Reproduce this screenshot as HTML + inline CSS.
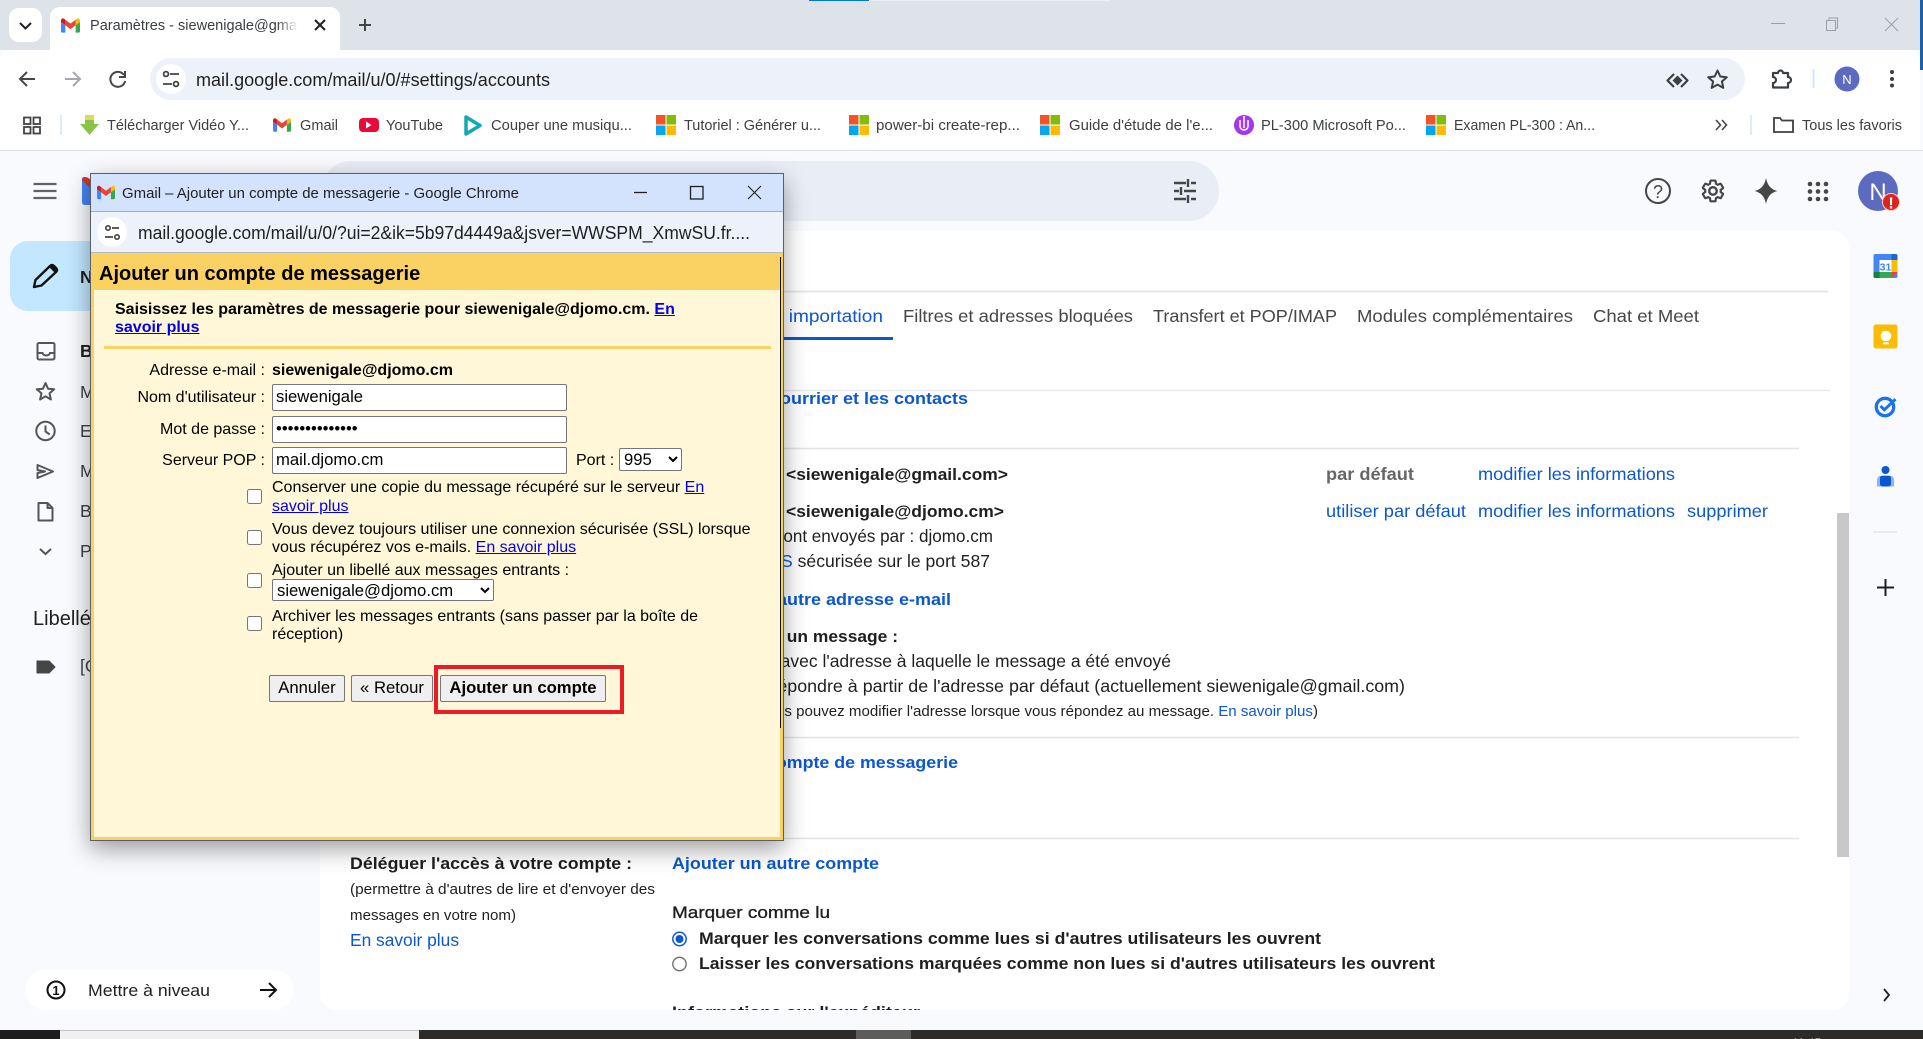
<!DOCTYPE html>
<html lang="fr">
<head>
<meta charset="utf-8">
<title>Paramètres - siewenigale@gmail.com - Gmail</title>
<style>
html,body{margin:0;padding:0;width:1923px;height:1039px;overflow:hidden;background:#f8fafd;font-family:"Liberation Sans",Arial,sans-serif}
.a{position:absolute}
svg{position:absolute;left:0;top:0;overflow:visible}
svg text{font-family:"Liberation Sans",Arial,sans-serif}
#pop{position:absolute;left:90px;top:173px;width:694px;height:668px;box-sizing:border-box;border:1px solid #5a5f66;background:#fff7d7;box-shadow:0 8px 22px rgba(0,0,0,.38);z-index:5}
#in{position:absolute;left:-91px;top:-174px;width:1923px;height:1039px}
#in .t{position:absolute;font-size:16px;line-height:18px;color:#000;white-space:nowrap}
#in a{color:#00e;text-decoration:underline}
#in input[type=text],#in input[type=password]{position:absolute;box-sizing:border-box;left:272px;width:295px;height:27px;padding:0 3px 2px;border:1px solid #767676;border-radius:2px;background:#fff;font:16.67px "Liberation Sans",Arial,sans-serif;color:#000;margin:0;outline:0}
#in input[type=checkbox]{position:absolute;left:247px;width:15px;height:15px;margin:0}
#in select{position:absolute;box-sizing:border-box;font:16.67px "Liberation Sans",Arial,sans-serif;background:#fff;border:1px solid #767676;border-radius:2px;color:#000;margin:0;padding:0}
#in button{position:absolute;box-sizing:border-box;top:675px;height:27px;border:1px solid #767676;border-radius:2px;background:#efefef;font:16.67px "Liberation Sans",Arial,sans-serif;color:#000;padding:0 0 2px;margin:0}
</style>
</head>
<body>

<!-- Browser chrome backgrounds -->
<div class="a" style="left:0;top:0;width:1923px;height:50px;background:#dee3e9"></div>
<div class="a" style="left:809px;top:0;width:60px;height:1px;background:#0078d4"></div>
<div class="a" style="left:869px;top:0;width:241px;height:1px;background:#eceff2"></div>
<div class="a" style="left:0;top:50px;width:1920px;height:100px;background:#fff;border-radius:10px 10px 0 0"></div>
<div class="a" style="left:0;top:150px;width:1923px;height:1px;background:#dfe1e5"></div>
<div class="a" style="left:1920px;top:0;width:3px;height:70px;background:#1f5fa8"></div>
<div class="a" style="left:9px;top:8px;width:33px;height:34px;background:#fff;border-radius:10px"></div>
<div class="a" style="left:50px;top:7px;width:290px;height:43px;background:#fff;border-radius:10px 10px 0 0"></div>
<div class="a" style="left:150px;top:58px;width:1595px;height:42px;background:#edf2fa;border-radius:21px"></div>
<div class="a" style="left:156px;top:64px;width:30px;height:30px;background:#fff;border-radius:50%"></div>

<!-- Gmail backgrounds -->
<div class="a" style="left:321px;top:161px;width:898px;height:60px;background:#e9eef6;border-radius:30px"></div>
<div class="a" style="left:320px;top:231px;width:1529px;height:779px;background:#fff;border-radius:16px"></div>
<div class="a" style="left:10px;top:241px;width:140px;height:70px;background:#c2e7ff;border-radius:18px"></div>
<div class="a" style="left:25px;top:970px;width:269px;height:40px;background:#fff;border-radius:20px"></div>
<div class="a" style="left:1837px;top:513px;width:12px;height:344px;background:#c8c8c8"></div>

<svg width="1923" height="1039" viewBox="0 0 1923 1039">
  <symbol id="gm" viewBox="0 0 24 24">
    <path fill="#4285f4" d="M1.6 21h3.900v-9.300L0 7.600V19.400C0 20.300.7 21 1.600 21z"/>
    <path fill="#34a853" d="M18.500 21h3.900c.9 0 1.600-.7 1.600-1.600V7.600l-5.500 4.100"/>
    <path fill="#fbbc04" d="M18.500 4.700v7L24 7.600V5.500c0-2-2.300-3.200-3.900-2z"/>
    <path fill="#ea4335" d="M5.500 11.700v-7L12 9.600l6.500-4.900v7L12 16.600"/>
    <path fill="#c5221f" d="M0 5.500v2.100l5.500 4.100v-7L3.900 3.500C2.300 2.300 0 3.500 0 5.500z"/>
  </symbol>
  <symbol id="ms" viewBox="0 0 20 20">
    <rect width="9.500" height="9.500" fill="#f35325"/><rect x="10.500" width="9.500" height="9.500" fill="#81bc06"/>
    <rect y="10.500" width="9.500" height="9.500" fill="#05a6f0"/><rect x="10.500" y="10.500" width="9.500" height="9.500" fill="#ffba08"/>
  </symbol>
  <linearGradient id="fade" x1="0" x2="1" y1="0" y2="0"><stop offset="0" stop-color="#fff" stop-opacity="0"/><stop offset="1" stop-color="#fff"/></linearGradient>

  <!-- tab -->
  <path d="M20 23l5.500 5.500L31 23" fill="none" stroke="#1f1f1f" stroke-width="2"/>
  <use href="#gm" x="61" y="15" width="19" height="21"/>
  <text x="90" y="30" font-size="15" fill="#3c4043" textLength="207" lengthAdjust="spacingAndGlyphs">Paramètres - siewenigale@gma</text>
  <rect x="277" y="14" width="21" height="24" fill="url(#fade)"/>
  <path d="M315 20l10 10M325 20l-10 10" stroke="#1f1f1f" stroke-width="2"/>
  <path d="M365 19v12M359 25h12" stroke="#444" stroke-width="2"/>
  <!-- window controls -->
  <path d="M1771 23.500h14" stroke="#9aa0a6" stroke-width="1"/>
  <path d="M1826.500 20.500h9v10h-9zM1829 20.500v-2.500h8.500v10h-2" fill="none" stroke="#9aa0a6"/>
  <path d="M1885 18l13 13M1898 18l-13 13" stroke="#9aa0a6"/>

  <!-- nav -->
  <path d="M35 79H21M27 72l-7 7 7 7" fill="none" stroke="#474747" stroke-width="2"/>
  <path d="M65 79h14M73 72l7 7-7 7" fill="none" stroke="#a4a7ab" stroke-width="2"/>
  <path d="M124 75a7.500 7.500 0 1 0 1.200 6M125 71v6h-6" fill="none" stroke="#474747" stroke-width="2"/>
  <g fill="none" stroke="#444" stroke-width="1.800"><circle cx="166" cy="74" r="2.400"/><path d="M170 74h9M163 84h9"/><circle cx="176" cy="84" r="2.400"/></g>
  <text x="196" y="86" font-size="18" fill="#1f1f1f" textLength="354" lengthAdjust="spacingAndGlyphs">mail.google.com/mail/u/0/#settings/accounts</text>
  <path d="M1674 74l-6.500 6.500 6.500 6.500M1681 74l6.500 6.500-6.500 6.500" fill="none" stroke="#3c4043" stroke-width="2.200" stroke-linejoin="round"/>
  <path d="M1677.500 75.500l5 5-5 5-5-5z" fill="#3c4043"/>
  <path d="M1717.500 70.500l2.800 6 6.500.7-4.900 4.300 1.400 6.400-5.800-3.300-5.800 3.300 1.400-6.400-4.900-4.300 6.500-.7z" fill="none" stroke="#3c4043" stroke-width="2" stroke-linejoin="round"/>
  <path d="M1773 73h5a2.500 2.500 0 0 1 5 0h5v4a3 3 0 0 1 0 6v4.500h-15V83a3 3 0 0 0 0-6z" fill="none" stroke="#3c4043" stroke-width="2.200" stroke-linejoin="round"/>
  <rect x="1812.500" y="69" width="2" height="19" fill="#d3e3fd"/>
  <circle cx="1847" cy="79" r="12.500" fill="#5c6bc0"/>
  <text x="1847" y="84" font-size="13" fill="#fff" text-anchor="middle">N</text>
  <g fill="#3c4043"><circle cx="1892" cy="72" r="2"/><circle cx="1892" cy="79" r="2"/><circle cx="1892" cy="85.500" r="2"/></g>

  <!-- bookmarks -->
  <g fill="none" stroke="#444" stroke-width="1.800"><rect x="24" y="117.500" width="6.500" height="6.500"/><rect x="33.500" y="117.500" width="6.500" height="6.500"/><rect x="24" y="127" width="6.500" height="6.500"/><rect x="33.500" y="127" width="6.500" height="6.500"/></g>
  <path d="M61 115v20" stroke="#d3e3fd" stroke-width="1.500"/>
  <path d="M85 115h9v9h5l-9.500 11L80 124h5z" fill="#8bc34a"/><path d="M85 115h9v5h-9z" fill="#d4e157"/>
  <text x="107" y="130" font-size="15" fill="#3c4043" textLength="142" lengthAdjust="spacingAndGlyphs">Télécharger Vidéo Y...</text>
  <use href="#gm" x="273" y="115" width="18" height="20"/>
  <text x="300" y="130" font-size="15" fill="#3c4043" textLength="38" lengthAdjust="spacingAndGlyphs">Gmail</text>
  <rect x="359" y="118" width="20" height="14" rx="4" fill="#ea0a3a"/><path d="M366 121.500v7l5.500-3.500z" fill="#fff"/>
  <text x="386" y="130" font-size="15" fill="#3c4043" textLength="57" lengthAdjust="spacingAndGlyphs">YouTube</text>
  <path d="M466 117l14 8.500-14 8.500z" fill="none" stroke="#12a8b8" stroke-width="3.500" stroke-linejoin="round"/>
  <text x="491" y="130" font-size="15" fill="#3c4043" textLength="141" lengthAdjust="spacingAndGlyphs">Couper une musiqu...</text>
  <use href="#ms" x="656" y="115" width="20" height="20"/>
  <text x="684" y="130" font-size="15" fill="#3c4043" textLength="137" lengthAdjust="spacingAndGlyphs">Tutoriel : Générer u...</text>
  <use href="#ms" x="849" y="115" width="20" height="20"/>
  <text x="876" y="130" font-size="15" fill="#3c4043" textLength="144" lengthAdjust="spacingAndGlyphs">power-bi create-rep...</text>
  <use href="#ms" x="1040" y="115" width="20" height="20"/>
  <text x="1069" y="130" font-size="15" fill="#3c4043" textLength="144" lengthAdjust="spacingAndGlyphs">Guide d'étude de l'e...</text>
  <circle cx="1244" cy="125" r="10" fill="#a435f0"/><path d="M1240 120v6a4 4 0 0 0 8 0v-6M1244 116v12" fill="none" stroke="#fff" stroke-width="1.500"/>
  <text x="1261" y="130" font-size="15" fill="#3c4043" textLength="145" lengthAdjust="spacingAndGlyphs">PL-300 Microsoft Po...</text>
  <use href="#ms" x="1426" y="115" width="20" height="20"/>
  <text x="1454" y="130" font-size="15" fill="#3c4043" textLength="141" lengthAdjust="spacingAndGlyphs">Examen PL-300 : An...</text>
  <path d="M1716 120l4.500 5-4.500 5M1722 120l4.500 5-4.500 5" fill="none" stroke="#3c4043" stroke-width="1.500"/>
  <path d="M1751 115v20" stroke="#d3e3fd" stroke-width="1.500"/>
  <path d="M1774 118h6l2 2.500h11v11.500h-19z" fill="none" stroke="#3c4043" stroke-width="1.800"/>
  <text x="1802" y="130" font-size="15" fill="#3c4043" textLength="100" lengthAdjust="spacingAndGlyphs">Tous les favoris</text>

  <!-- gmail header -->
  <g stroke="#5f6368" stroke-width="2.300"><path d="M33.500 184h23M33.500 191h23M33.500 198h23"/></g>
  <path d="M82 202v-23q0-2 3-2 3 0 7 5v23h-7q-3 0-3-3z" fill="#4285f4"/><path d="M82 180q0-3 3-3 3 0 7 4v9z" fill="#d93025"/>
  <g stroke="#444746" stroke-width="2.400" fill="none"><path d="M1174 183h12M1191 183h5M1174 191h5M1184 191h12M1174 199h12M1191 199h5M1188 179v8M1181 187v8M1188 195v8"/></g>
  <circle cx="1658" cy="191" r="12" fill="none" stroke="#444746" stroke-width="2"/>
  <text x="1658" y="198" font-size="18" fill="#444746" text-anchor="middle">?</text>
  <g transform="translate(1700 178) scale(1.080)">
    <path fill="none" stroke="#444746" stroke-width="2" d="M19.140 12.940c.04-.3.06-.61.06-.94 0-.32-.02-.64-.07-.94l2.030-1.580c.18-.14.23-.41.12-.61l-1.920-3.320c-.12-.22-.37-.29-.59-.22l-2.390.96c-.5-.38-1.030-.7-1.620-.94l-.36-2.540c-.04-.24-.24-.41-.48-.41h-3.840c-.24 0-.43.17-.47.41l-.36 2.540c-.59.24-1.130.57-1.620.94l-2.390-.96c-.22-.08-.47 0-.59.22L2.740 8.870c-.12.21-.08.47.12.61l2.030 1.580c-.05.3-.09.63-.09.94s.02.64.07.94l-2.030 1.580c-.18.14-.23.41-.12.61l1.920 3.320c.12.22.37.29.59.22l2.390-.96c.5.38 1.030.7 1.620.94l.36 2.540c.05.24.24.41.48.41h3.840c.24 0 .44-.17.47-.41l.36-2.540c.59-.24 1.130-.56 1.620-.94l2.390.96c.22.08.47 0 .59-.22l1.920-3.320c.12-.22.07-.47-.12-.61l-2.010-1.580z"/>
    <circle cx="12" cy="12" r="3.500" fill="none" stroke="#444746" stroke-width="2.200"/>
  </g>
  <path d="M1766 178q2 11 11.500 13-9.500 2-11.500 13-2-11-11.500-13 9.500-2 11.500-13z" fill="#444746"/>
  <g fill="#444746"><circle cx="1810" cy="184" r="2.300"/><circle cx="1818" cy="184" r="2.300"/><circle cx="1826" cy="184" r="2.300"/><circle cx="1810" cy="191.500" r="2.300"/><circle cx="1818" cy="191.500" r="2.300"/><circle cx="1826" cy="191.500" r="2.300"/><circle cx="1810" cy="199" r="2.300"/><circle cx="1818" cy="199" r="2.300"/><circle cx="1826" cy="199" r="2.300"/></g>
  <circle cx="1878" cy="191" r="20" fill="#5c6bc0"/>
  <text x="1878" y="200" font-size="24" fill="#fff" text-anchor="middle">N</text>
  <circle cx="1891" cy="202" r="8.500" fill="#d9251d" stroke="#f3c9c5"/>
  <text x="1891" y="208.500" font-size="16" font-weight="bold" fill="#fff" text-anchor="middle">!</text>

  <!-- left nav -->
  <path d="M34 287l1.500-7L50 266q2-2 4 0l2 2q2 2 0 4L41.500 285.500z" fill="none" stroke="#111" stroke-width="2.400" stroke-linejoin="round"/>
  <path d="M49 267l5-2 3 3-2 5z" fill="#111"/>
  <text x="80" y="283" font-size="17.500" font-weight="bold" fill="#1f1f1f">Nouveau message</text>
  <g fill="none" stroke="#555" stroke-width="2">
    <rect x="37.500" y="343" width="17" height="16.500" rx="1.500"/><path d="M37.500 353h5a3.800 3 0 0 0 7.500 0h4.500"/>
    <path d="M45.500 383l2.500 5.700 6.200.6-4.700 4.100 1.400 6.100-5.400-3.200-5.400 3.200 1.400-6.100-4.700-4.100 6.200-.6z" stroke-linejoin="round"/>
    <circle cx="45.500" cy="431" r="9.200"/><path d="M45.500 425.500v6l4.200 3"/>
    <path d="M37.500 465l15.500 6.500-15.500 6.500v-5l7.500-1.500-7.500-1.500z" stroke-linejoin="round"/>
    <path d="M38.500 503h9l5 5v12.500H38.500zM47.500 503v5h5" stroke-linejoin="round"/>
    <path d="M40 549l5.500 5 5.500-5"/>
  </g>
  <g font-size="17.500" fill="#3c4043">
    <text x="80" y="357" font-weight="bold" fill="#1f1f1f">Boîte de réception</text>
    <text x="80" y="398">Messages suivis</text>
    <text x="80" y="437">En attente</text>
    <text x="80" y="477">Messages envoyés</text>
    <text x="80" y="517">Brouillons</text>
    <text x="80" y="557">Plus</text>
    <text x="80" y="672">[Gmail]</text>
  </g>
  <text x="33" y="625" font-size="20" fill="#1f1f1f">Libellés</text>
  <path d="M37 661h12l6 6-6 6H37z" fill="#444746" stroke="#444746" stroke-linejoin="round"/>
  <circle cx="56" cy="990" r="8.500" fill="none" stroke="#111" stroke-width="2"/>
  <text x="56" y="995" font-size="13" font-weight="bold" fill="#111" text-anchor="middle">1</text>
  <text x="88" y="996" font-size="17" fill="#1f1f1f" textLength="122" lengthAdjust="spacingAndGlyphs">Mettre à niveau</text>
  <path d="M260 990h15M269 983l7 7-7 7" fill="none" stroke="#111" stroke-width="2"/>

  <!-- settings -->
  <path d="M320 291.500h1508" stroke="#e6e6e6" stroke-width="2"/>
  <text x="686" y="322" font-size="17.500" fill="#0b57d0" textLength="197" lengthAdjust="spacingAndGlyphs">Comptes et importation</text>
  <rect x="690" y="337" width="203" height="3" fill="#0b57d0"/>
  <g font-size="17.500" fill="#444746">
    <text x="903" y="322" textLength="230" lengthAdjust="spacingAndGlyphs">Filtres et adresses bloquées</text>
    <text x="1153" y="322" textLength="184" lengthAdjust="spacingAndGlyphs">Transfert et POP/IMAP</text>
    <text x="1357" y="322" textLength="216" lengthAdjust="spacingAndGlyphs">Modules complémentaires</text>
    <text x="1593" y="322" textLength="106" lengthAdjust="spacingAndGlyphs">Chat et Meet</text>
  </g>
  <path d="M330 390.500h1500" stroke="#e8eaed" stroke-width="1.500"/>
  <text x="672" y="404" font-size="17" font-weight="bold" fill="#0b57d0" textLength="296" lengthAdjust="spacingAndGlyphs">Importer le courrier et les contacts</text>
  <path d="M330 448.500h1469" stroke="#e3e3e3" stroke-width="1.500"/>
  <text x="786" y="480" font-size="17" font-weight="bold" fill="#1f1f1f" textLength="222" lengthAdjust="spacingAndGlyphs">&lt;siewenigale@gmail.com&gt;</text>
  <text x="1326" y="480" font-size="17.500" font-weight="bold" fill="#666" textLength="88" lengthAdjust="spacingAndGlyphs">par défaut</text>
  <text x="1478" y="480" font-size="17.500" fill="#0b57d0" textLength="197" lengthAdjust="spacingAndGlyphs">modifier les informations</text>
  <text x="786" y="517" font-size="17" font-weight="bold" fill="#1f1f1f" textLength="218" lengthAdjust="spacingAndGlyphs">&lt;siewenigale@djomo.cm&gt;</text>
  <text x="1326" y="517" font-size="17.500" fill="#0b57d0" textLength="140" lengthAdjust="spacingAndGlyphs">utiliser par défaut</text>
  <text x="1478" y="517" font-size="17.500" fill="#0b57d0" textLength="197" lengthAdjust="spacingAndGlyphs">modifier les informations</text>
  <text x="1687" y="517" font-size="17.500" fill="#0b57d0" textLength="81" lengthAdjust="spacingAndGlyphs">supprimer</text>
  <text x="660" y="542" font-size="17.500" fill="#1f1f1f" textLength="333" lengthAdjust="spacingAndGlyphs">Les messages sont envoyés par : djomo.cm</text>
  <text x="672" y="567" font-size="17.500" fill="#1f1f1f" textLength="318" lengthAdjust="spacingAndGlyphs">Connexion <tspan fill="#0b57d0">TLS</tspan> sécurisée sur le port 587</text>
  <text x="672" y="605" font-size="17" font-weight="bold" fill="#0b57d0" textLength="279" lengthAdjust="spacingAndGlyphs">Ajouter une autre adresse e-mail</text>
  <text x="606" y="642" font-size="17" font-weight="bold" fill="#1f1f1f" textLength="292" lengthAdjust="spacingAndGlyphs">Lorsque je réponds à un message :</text>
  <text x="699" y="667" font-size="17.500" fill="#1f1f1f" textLength="472" lengthAdjust="spacingAndGlyphs">Répondre avec l'adresse à laquelle le message a été envoyé</text>
  <text x="699" y="692" font-size="17.500" fill="#1f1f1f" textLength="706" lengthAdjust="spacingAndGlyphs">Toujours répondre à partir de l'adresse par défaut (actuellement siewenigale@gmail.com)</text>
  <text x="672" y="716" font-size="15" fill="#1f1f1f" textLength="646" lengthAdjust="spacingAndGlyphs">(Remarque : vous pouvez modifier l'adresse lorsque vous répondez au message. <tspan fill="#0b57d0">En savoir plus</tspan>)</text>
  <path d="M330 737.500h1469" stroke="#e3e3e3" stroke-width="1.500"/>
  <text x="672" y="768" font-size="17" font-weight="bold" fill="#0b57d0" textLength="286" lengthAdjust="spacingAndGlyphs">Ajouter un compte de messagerie</text>
  <path d="M330 838.500h1469" stroke="#e3e3e3" stroke-width="1.500"/>
  <text x="350" y="869" font-size="17" font-weight="bold" fill="#1f1f1f" textLength="282" lengthAdjust="spacingAndGlyphs">Déléguer l'accès à votre compte :</text>
  <text x="350" y="894" font-size="15" fill="#1f1f1f" textLength="305" lengthAdjust="spacingAndGlyphs">(permettre à d'autres de lire et d'envoyer des</text>
  <text x="350" y="920" font-size="15" fill="#1f1f1f" textLength="166" lengthAdjust="spacingAndGlyphs">messages en votre nom)</text>
  <text x="350" y="946" font-size="17.500" fill="#0b57d0" textLength="109" lengthAdjust="spacingAndGlyphs">En savoir plus</text>
  <text x="672" y="869" font-size="17" font-weight="bold" fill="#0b57d0" textLength="207" lengthAdjust="spacingAndGlyphs">Ajouter un autre compte</text>
  <text x="672" y="918" font-size="17" fill="#1f1f1f" stroke="#1f1f1f" stroke-width=".35" textLength="158" lengthAdjust="spacingAndGlyphs">Marquer comme lu</text>
  <circle cx="679.500" cy="939" r="6.700" fill="none" stroke="#0b57d0" stroke-width="1.500"/><circle cx="679.500" cy="939" r="4" fill="#0b57d0"/>
  <circle cx="679.500" cy="964" r="6.700" fill="none" stroke="#6b6b6b" stroke-width="1.300"/>
  <text x="699" y="944" font-size="17" font-weight="bold" fill="#1f1f1f" textLength="622" lengthAdjust="spacingAndGlyphs">Marquer les conversations comme lues si d'autres utilisateurs les ouvrent</text>
  <text x="699" y="969" font-size="17" font-weight="bold" fill="#1f1f1f" textLength="736" lengthAdjust="spacingAndGlyphs">Laisser les conversations marquées comme non lues si d'autres utilisateurs les ouvrent</text>
  <svg x="0" y="0" width="1923" height="1010" viewBox="0 0 1923 1010" style="overflow:hidden">
    <text x="672" y="1018" font-size="17" font-weight="bold" fill="#1f1f1f" textLength="248" lengthAdjust="spacingAndGlyphs">Informations sur l'expéditeur</text>
  </svg>

  <!-- right side panel -->
  <rect x="1873.500" y="254" width="24" height="24" rx="2" fill="#4285f4"/>
  <path d="M1891.500 254h4a2 2 0 0 1 2 2v4h-6z" fill="#1967d2"/>
  <rect x="1891.500" y="260" width="6" height="12" fill="#fbbc04"/>
  <rect x="1879.500" y="272" width="12" height="6" fill="#34a853"/>
  <path d="M1873.500 272h6v6h-4a2 2 0 0 1-2-2z" fill="#188038"/>
  <path d="M1891.500 272h6l-6 6z" fill="#ea4335"/>
  <rect x="1879.500" y="260" width="12" height="12" fill="#fff"/>
  <text x="1885.500" y="270.500" font-size="10.500" font-weight="bold" fill="#4285f4" text-anchor="middle">31</text>
  <rect x="1873.500" y="324.500" width="24" height="24" rx="2.500" fill="#fbbc04"/><circle cx="1886" cy="336" r="5.300" fill="#fff"/><rect x="1883" y="342.500" width="6" height="1.800" fill="#fff"/>
  <circle cx="1885" cy="407" r="8.700" fill="none" stroke="#1a73e8" stroke-width="3.300"/><path d="M1880.500 406l3.800 3.800 11.200-10.600" fill="none" stroke="#1a73e8" stroke-width="3"/>
  <circle cx="1885.500" cy="470" r="4" fill="#0b57d0"/>
  <path d="M1877 486.500v-6q0-4.800 4-4.800h9q4 0 4 4.800v6z" fill="#8ab4f8"/><rect x="1880" y="475.700" width="11" height="10.800" rx="2.500" fill="#0b57d0"/>
  <path d="M1873 532h24" stroke="#dadce0"/>
  <path d="M1885.500 579v17M1877 587.500h17" stroke="#1f1f1f" stroke-width="2"/>
  <path d="M1884 989l5 6-5 6" fill="none" stroke="#1f1f1f" stroke-width="1.800"/>
</svg>

<!-- Taskbar -->
<div class="a" style="left:0;top:1030px;width:1923px;height:9px;background:#2c2b2a;overflow:hidden">
  <div class="a" style="left:0;top:0;width:60px;height:9px;background:#1d1c1c"></div>
  <div class="a" style="left:60px;top:0;width:359px;height:9px;background:#f0f0f0;border-top:1px solid #c4c4c4;box-sizing:border-box"></div>
  <div class="a" style="left:856px;top:0;width:55px;height:9px;background:#5c5c5a"></div>
  <div class="a" style="left:1792px;top:6px;font-size:12px;color:#fff;line-height:14px">11:45</div>
</div>

<!-- Popup window -->
<div id="pop">
<div id="in">
  <div class="a" style="left:91px;top:174px;width:692px;height:37px;background:#d3e3fd"></div>
  <div class="a" style="left:91px;top:211px;width:692px;height:1px;background:#a9adb3"></div>
  <div class="a" style="left:91px;top:212px;width:692px;height:40px;background:#edf2fa"></div>
  <div class="a" style="left:91px;top:252px;width:692px;height:1px;background:#b9bcc0"></div>
  <div class="a" style="left:97px;top:217px;width:30px;height:30px;background:#fff;border-radius:50%"></div>
  <div class="a" style="left:91px;top:253px;width:692px;height:37px;background:#fad163"></div>
  <div class="a" style="left:91px;top:290px;width:3px;height:550px;background:#fad163"></div>
  <div class="a" style="left:780px;top:290px;width:3px;height:550px;background:#fad163"></div>
  <div class="a" style="left:91px;top:837px;width:692px;height:3px;background:#fad163"></div>
  <div class="a" style="left:780px;top:257px;width:1px;height:471px;background:#111"></div>
  <svg width="1923" height="1039" viewBox="0 0 1923 1039">
    <use href="#gm" x="97" y="182" width="18" height="21"/>
    <text x="122" y="198" font-size="15" fill="#1f1f1f" textLength="397" lengthAdjust="spacingAndGlyphs">Gmail – Ajouter un compte de messagerie - Google Chrome</text>
    <path d="M634 192.500h13" stroke="#1f1f1f" stroke-width="1.300"/>
    <rect x="690.500" y="186.500" width="12.500" height="12.500" fill="none" stroke="#1f1f1f" stroke-width="1.300"/>
    <path d="M748 186l13 13M761 186l-13 13" stroke="#1f1f1f" stroke-width="1.100"/>
    <g fill="none" stroke="#444" stroke-width="1.700"><circle cx="108" cy="228" r="2.200"/><path d="M112 228h7M105 237h8"/><circle cx="117" cy="237" r="2.200"/></g>
    <text x="138" y="239" font-size="18" fill="#1f1f1f" textLength="612" lengthAdjust="spacingAndGlyphs">mail.google.com/mail/u/0/?ui=2&amp;ik=5b97d4449a&amp;jsver=WWSPM_XmwSU.fr....</text>
  </svg>

  <div class="t" style="left:99px;top:262px;font-size:20px;line-height:24px;font-weight:bold">Ajouter un compte de messagerie</div>
  <div class="t" style="left:115px;top:301px;font-weight:bold">Saisissez les paramètres de messagerie pour siewenigale@djomo.cm. <a href="#">En</a></div>
  <div class="t" style="left:115px;top:319px;font-weight:bold"><a href="#">savoir plus</a></div>
  <div class="a" style="left:104px;top:346px;width:667px;height:3px;background:#fad163"></div>

  <div class="t" style="left:99px;width:166px;top:361.500px;text-align:right">Adresse e-mail :</div>
  <div class="t" style="left:272px;top:361.500px;font-weight:bold">siewenigale@djomo.cm</div>
  <div class="t" style="left:99px;width:166px;top:388.500px;text-align:right">Nom d'utilisateur :</div>
  <input type="text" value="siewenigale" style="top:384px">
  <div class="t" style="left:99px;width:166px;top:420.500px;text-align:right">Mot de passe :</div>
  <input type="password" value="abcdefghijklmn" style="top:416px">
  <div class="t" style="left:99px;width:166px;top:451.500px;text-align:right">Serveur POP :</div>
  <input type="text" value="mail.djomo.cm" style="top:447px">
  <div class="t" style="left:576px;top:451.500px">Port :</div>
  <select style="left:619px;top:448px;width:63px;height:23px"><option>995</option></select>

  <input type="checkbox" style="top:489px">
  <div class="t" style="left:272px;top:479px">Conserver une copie du message récupéré sur le serveur <a href="#">En</a></div>
  <div class="t" style="left:272px;top:497.500px"><a href="#">savoir plus</a></div>
  <input type="checkbox" style="top:530px">
  <div class="t" style="left:272px;top:520.500px">Vous devez toujours utiliser une connexion sécurisée (SSL) lorsque</div>
  <div class="t" style="left:272px;top:538.500px">vous récupérez vos e-mails. <a href="#">En savoir plus</a></div>
  <input type="checkbox" style="top:573px">
  <div class="t" style="left:272px;top:562px">Ajouter un libellé aux messages entrants :</div>
  <select style="left:272px;top:579px;width:222px;height:22px"><option>siewenigale@djomo.cm</option></select>
  <input type="checkbox" style="top:616px">
  <div class="t" style="left:272px;top:608px">Archiver les messages entrants (sans passer par la boîte de</div>
  <div class="t" style="left:272px;top:626px">réception)</div>

  <button style="left:269px;width:76px">Annuler</button>
  <button style="left:351px;width:82px">« Retour</button>
  <button style="left:440px;width:166px;font-weight:bold">Ajouter un compte</button>
  <div class="a" style="left:434px;top:665px;width:190px;height:49px;box-sizing:border-box;border:4px solid #ed1c24"></div>
</div>
</div>
</body>
</html>
